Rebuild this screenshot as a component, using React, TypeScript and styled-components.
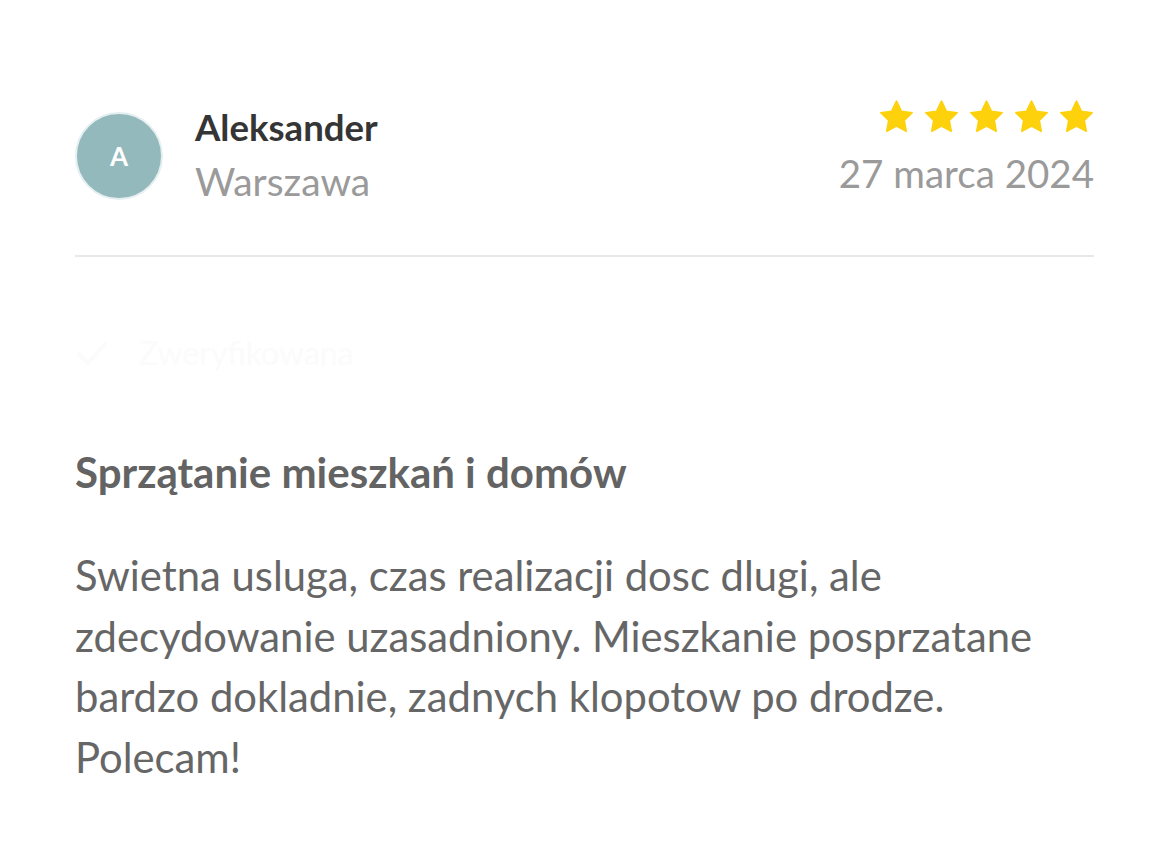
import React from "react";
import styled, { createGlobalStyle } from "styled-components";

const Global = createGlobalStyle`
  html, body { margin: 0; padding: 0; background: #fff; }
  body { font-family: Lato, "Open Sans", sans-serif; }
`;

const Page = styled.div`
  width: 1169px;
  height: 850px;
  box-sizing: border-box;
  padding: 100px 75px 0 75px;
  background: #fff;
`;

const Header = styled.div`
  display: flex;
  justify-content: space-between;
  align-items: flex-start;
  padding-bottom: 50px;
  border-bottom: 2px solid #e8e8e8;
`;

const Author = styled.div`
  display: flex;
  align-items: flex-start;
  gap: 32px;
`;

const Avatar = styled.div`
  margin-top: 12px;
  width: 84px;
  height: 84px;
  border-radius: 50%;
  background: #94b9bd;
  border: 2px solid #e5eff0;
  display: flex;
  align-items: center;
  justify-content: center;
  color: #fff;
  font-weight: 700;
  font-size: 26px;
  flex-shrink: 0;
`;

const Names = styled.div`
  margin-top: 5.5px;
  display: flex;
  flex-direction: column;
  gap: 9px;
`;

const Name = styled.div`
  font-weight: 700;
  font-size: 36.6px;
  color: #353535;
  line-height: 1.2;
`;

const City = styled.div`
  font-size: 39px;
  color: #9a9a9a;
  line-height: 1.2;
`;

const Meta = styled.div`
  display: flex;
  flex-direction: column;
  align-items: flex-end;
  gap: 18px;
`;

const Stars = styled.div`
  display: flex;
  gap: 12px;
  margin-right: 1px;
`;

const DateText = styled.div`
  font-size: 38.5px;
  color: #9a9a9a;
  line-height: 1.2;
`;

const Verified = styled.div`
  display: flex;
  align-items: center;
  gap: 30px;
  margin-top: 77px;
  color: #fbfbfb;
  font-size: 32px;
  line-height: 1.2;
`;

const Title = styled.h2`
  margin: 74px 0 0 0;
  font-size: 42px;
  font-weight: 700;
  color: #636363;
  line-height: 1.2;
`;

const Body = styled.p`
  margin: 48.5px 0 0 0;
  font-size: 41.8px;
  color: #666;
  line-height: 60.5px;
`;

const Star = () => (
  <svg width="33" height="32" viewBox="2 2 20 19.2">
    <path
      d="M12 2.6l2.9 6.1 6.6.9-4.8 4.6 1.2 6.6L12 17.6l-5.9 3.2 1.2-6.6-4.8-4.6 6.6-.9z"
      fill="#fdd10c"
      stroke="#fdd10c"
      strokeWidth="1"
      strokeLinejoin="round"
    />
  </svg>
);

export default function App() {
  return (
    <Page>
      <Global />
      <Header>
        <Author>
          <Avatar>A</Avatar>
          <Names>
            <Name>Aleksander</Name>
            <City>Warszawa</City>
          </Names>
        </Author>
        <Meta>
          <Stars>
            {[0, 1, 2, 3, 4].map((i) => (
              <Star key={i} />
            ))}
          </Stars>
          <DateText>27 marca 2024</DateText>
        </Meta>
      </Header>
      <Verified>
        <svg width="34" height="28" viewBox="0 0 34 28">
          <path d="M3 14l10 10L31 4" stroke="#fbfbfb" strokeWidth="4" fill="none" />
        </svg>
        <span>Zweryfikowana</span>
      </Verified>
      <Title>Sprzątanie mieszkań i domów</Title>
      <Body>
        Swietna usluga, czas realizacji dosc dlugi, ale zdecydowanie uzasadniony. Mieszkanie posprzatane
        bardzo dokladnie, zadnych klopotow po drodze. Polecam!
      </Body>
    </Page>
  );
}
